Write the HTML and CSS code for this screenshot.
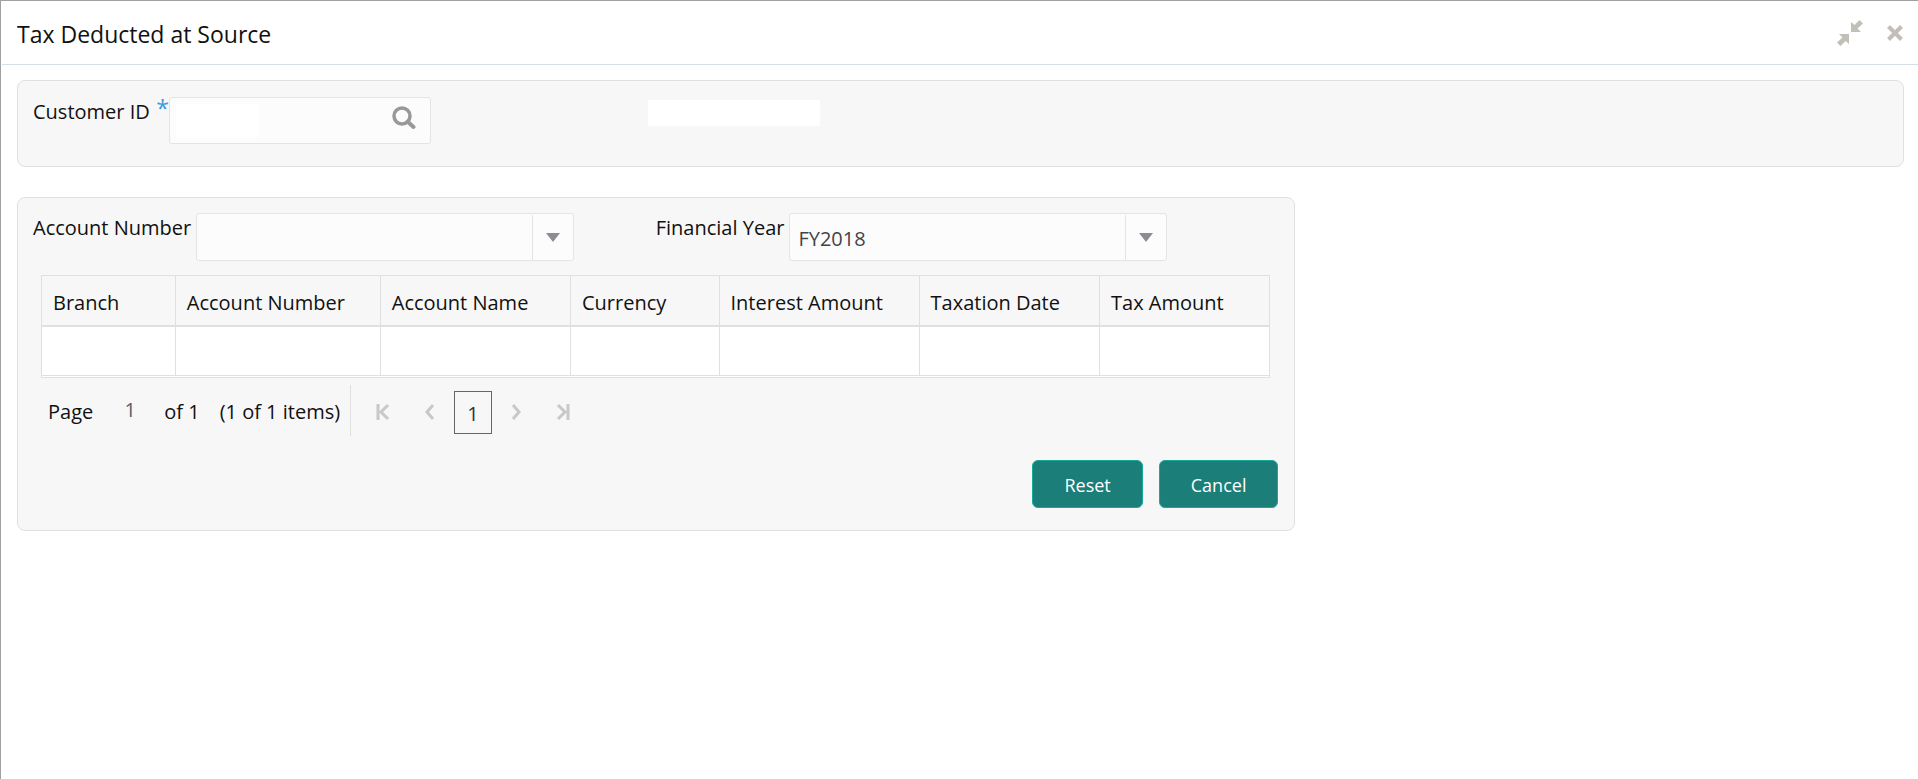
FILE: index.html
```html
<!DOCTYPE html>
<html lang="en">
<head>
  <meta charset="UTF-8">
  <meta name="viewport" content="width=device-width, initial-scale=1.0">
  <title>Tax Deducted at Source</title>
  <link rel="stylesheet" href="styles.css">
</head>
<body>

  <header class="title-bar">
    <h1>Tax Deducted at Source</h1>
    <div class="window-actions">
      <button type="button" class="icon-btn" aria-label="Restore">
        <svg width="26" height="26" viewBox="0 0 26 26" fill="#c2beb8">
          <path d="M14 2v10h10l-3.500-3.500L26 3.500 22.500 0l-5 5z"/>
          <path d="M12 24V14H2l3.500 3.500L0 22.500 3.500 26l5-5z"/>
        </svg>
      </button>
      <button type="button" class="icon-btn" aria-label="Close">
        <svg width="16" height="16" viewBox="0 0 16 16" fill="none" stroke="#c2beb8" stroke-width="4">
          <path d="M1.500 1.500l13 13M14.500 1.500l-13 13"/>
        </svg>
      </button>
    </div>
  </header>

  <main>
    <section class="panel customer">
      <div class="field">
        <label for="customer-id">Customer ID</label>
        <span class="required">*</span>
        <div class="lookup">
          <input type="text" id="customer-id">
          <button type="button" class="icon-btn" aria-label="Search">
            <svg width="24" height="24" viewBox="0 0 24 24" fill="none" stroke="#999">
              <circle cx="10" cy="10" r="8" stroke-width="3.500"/>
              <path d="M15.500 15.500l6 5.500" stroke-width="4" stroke-linecap="round"/>
            </svg>
          </button>
        </div>
      </div>
      <output class="customer-name" for="customer-id"></output>
    </section>

    <section class="panel details">
      <div class="filters">
        <div class="field">
          <label for="account-number">Account Number</label>
          <div class="combo">
            <select id="account-number">
              <option></option>
            </select>
            <span class="arrow"></span>
          </div>
        </div>
        <div class="field">
          <label for="financial-year">Financial Year</label>
          <div class="combo">
            <select id="financial-year">
              <option>FY2018</option>
            </select>
            <span class="arrow"></span>
          </div>
        </div>
      </div>

      <div class="table-wrap">
        <table>
          <colgroup>
            <col class="col-branch">
            <col class="col-number">
            <col class="col-name">
            <col class="col-currency">
            <col class="col-interest">
            <col class="col-date">
            <col class="col-tax">
          </colgroup>
          <thead>
            <tr>
              <th>Branch</th>
              <th>Account Number</th>
              <th>Account Name</th>
              <th>Currency</th>
              <th>Interest Amount</th>
              <th>Taxation Date</th>
              <th>Tax Amount</th>
            </tr>
          </thead>
          <tbody>
            <tr>
              <td></td>
              <td></td>
              <td></td>
              <td></td>
              <td></td>
              <td></td>
              <td></td>
            </tr>
          </tbody>
        </table>
      </div>

      <nav class="pager">
        <div class="page-info">
          <label for="page-number">Page</label>
          <input type="text" id="page-number" value="1">
          <span class="page-total">of 1</span>
          <span>(1 of 1 items)</span>
        </div>
        <div class="page-links">
          <button type="button" class="icon-btn" aria-label="First page" disabled>
            <svg width="14" height="18" viewBox="0 0 14 18"><path d="M2 1v16M12 2L5 9l7 7"/></svg>
          </button>
          <button type="button" class="icon-btn" aria-label="Previous page" disabled>
            <svg width="10" height="18" viewBox="0 0 10 18"><path d="M8 2L2 9l6 7"/></svg>
          </button>
          <button type="button" class="current">1</button>
          <button type="button" class="icon-btn" aria-label="Next page" disabled>
            <svg width="10" height="18" viewBox="0 0 10 18"><path d="M2 2l6 7-6 7"/></svg>
          </button>
          <button type="button" class="icon-btn" aria-label="Last page" disabled>
            <svg width="14" height="18" viewBox="0 0 14 18"><path d="M12 1v16M2 2l7 7-7 7"/></svg>
          </button>
        </div>
      </nav>

      <div class="actions">
        <button type="button">Reset</button>
        <button type="button">Cancel</button>
      </div>
    </section>
  </main>

</body>
</html>
```
FILE: styles.css
```css
* {
  box-sizing: border-box;
}

body {
  margin: 0;
  min-height: 100vh;
  border-top: 1px solid #a0a0a0;
  border-left: 1px solid #a0a0a0;
  background: #fff;
  color: #111;
  font-family: "Segoe UI", "Open Sans", "Noto Sans", sans-serif;
  font-size: 20px;
  line-height: 28px;
}

button, input, select {
  font: inherit;
}

svg {
  display: block;
}

.icon-btn {
  padding: 0;
  border: 0;
  background: none;
}

/* title bar */

.title-bar {
  display: flex;
  align-items: center;
  justify-content: space-between;
  height: 64px;
  margin-left: 1px;
  padding: 2px 15px 0 15px;
  border-bottom: 1px solid #d6dfe6;
}

h1 {
  margin: 0;
  font-size: 23px;
  font-weight: 400;
}

.window-actions {
  display: flex;
  align-items: center;
  gap: 24px;
  padding-bottom: 2px;
}

/* panels */

main {
  padding: 15px 14px 16px 16px;
}

.panel {
  border: 1px solid #e0e0e0;
  border-radius: 8px;
  background: #f7f7f7;
}

.customer {
  display: grid;
  grid-template-columns: 1fr 2fr;
  height: 87px;
  margin-bottom: 30px;
  padding: 16px 24px 16px 15px;
}

.field {
  display: flex;
  align-items: flex-start;
}

.field label {
  padding-top: 1px;
  white-space: nowrap;
}

.required {
  margin-left: auto;
  color: #3a9bdc;
  font-size: 23px;
  line-height: 22px;
}

.customer .field {
  width: 398px;
}

.lookup {
  display: flex;
  align-items: center;
  justify-content: space-between;
  width: 262px;
  height: 47px;
  padding: 0 14px 0 6px;
  border: 1px solid #e4e4e4;
  border-radius: 3px;
  background: #fcfcfc;
}

.lookup input {
  width: 83px;
  height: 33px;
  border: 0;
  background: #fff;
}

.lookup .icon-btn {
  margin-bottom: 6px;
}

.customer-name {
  width: 172px;
  height: 26px;
  margin-top: 3px;
  background: #fff;
}

.details {
  width: 67.75%;
  padding: 15px 16px 22px 15px;
}

.filters {
  display: grid;
  grid-template-columns: 1fr 1fr;
}

.filters label {
  margin-right: 5px;
}

.combo {
  display: flex;
  position: relative;
  width: 378px;
  height: 48px;
  border: 1px solid #e4e4e4;
  border-radius: 3px;
  background: #fcfcfc;
}

.combo select {
  width: 100%;
  padding: 3px 50px 0 8px;
  border: 0;
  background: none;
  color: #444;
  appearance: none;
}

.arrow {
  display: flex;
  position: absolute;
  top: 1px;
  right: 0;
  bottom: 0;
  align-items: center;
  justify-content: center;
  width: 41px;
  border-left: 1px solid #e4e4e4;
  pointer-events: none;
}

.arrow::before {
  content: "";
  border: 7px solid transparent;
  border-top: 9px solid #8a8d91;
  border-bottom: 0;
}

/* table */

.table-wrap {
  margin: 14px 8px 0;
  padding-bottom: 1px;
  border: 1px solid #e0e0e0;
  background: #fff;
}

table {
  width: 100%;
  table-layout: fixed;
  border-collapse: separate;
  border-spacing: 0;
}

.col-branch { width: 10.9%; }
.col-number { width: 16.7%; }
.col-name { width: 15.5%; }
.col-currency { width: 12.1%; }
.col-interest { width: 16.3%; }
.col-date { width: 14.7%; }
.col-tax { width: 13.8%; }

th {
  height: 51px;
  padding: 4px 0 0 11px;
  border-right: 1px solid #e0e0e0;
  border-bottom: 2px solid #e0e0e0;
  background: #f7f7f7;
  font-weight: 400;
  text-align: left;
}

td {
  height: 49px;
  border-right: 1px solid #e0e0e0;
  border-bottom: 1px solid #e0e0e0;
}

th:last-child, td:last-child {
  border-right: 0;
}

/* pager */

.pager {
  display: flex;
  height: 51px;
  margin: 7px 8px 24px;
}

.page-info {
  display: flex;
  align-items: center;
  width: 310px;
  padding: 2px 0 0 7px;
  border-right: 1px solid #e0e0e0;
  white-space: nowrap;
}

.page-info input {
  width: 50px;
  height: 34px;
  margin: 0 9px 0 12px;
  padding: 0 0 4px;
  border: 0;
  background: none;
  color: #5a5f6b;
  text-align: center;
}

.page-total {
  margin-right: 20px;
}

.page-links {
  display: flex;
  align-items: center;
  gap: 19px;
  margin: 3px 0 0 25px;
}

.page-links .icon-btn:first-child {
  margin-right: 16px;
}

.page-links .icon-btn:last-child {
  margin-left: 16px;
}

.page-links svg {
  fill: none;
  stroke: #c8c8c8;
  stroke-width: 3;
}

.current {
  width: 38px;
  height: 43px;
  padding: 4px 0 0;
  border: 1px solid #666;
  background: none;
  color: #333;
}

/* buttons */

.actions {
  display: flex;
  justify-content: flex-end;
  gap: 16px;
}

.actions button {
  height: 48px;
  padding: 2px 31px 0;
  border: 1px solid #17a897;
  border-radius: 6px;
  background: #1b7e79;
  color: #fff;
  font-size: 18px;
}
```
